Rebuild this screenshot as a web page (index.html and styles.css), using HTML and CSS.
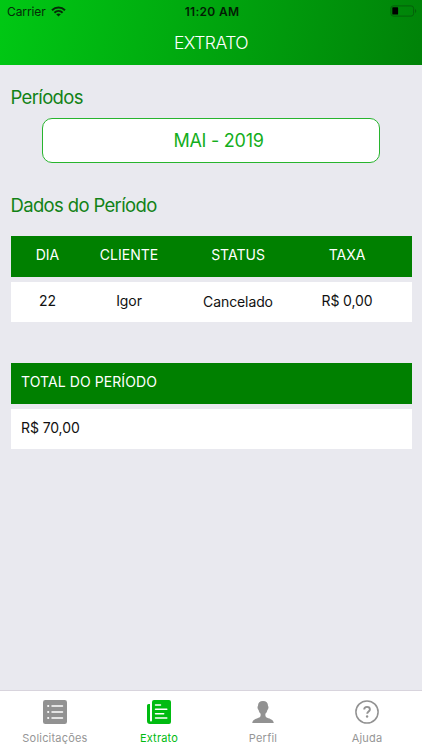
FILE: index.html
```html
<!DOCTYPE html>
<html lang="pt-BR">
<head>
<meta charset="utf-8">
<title>Extrato</title>
<link rel="stylesheet" href="styles.css">
</head>
<body>
<header class="header">
  <div class="status">
    <div class="carrier"><span>Carrier</span>
      <svg width="15" height="11" viewBox="0 0 15 11" fill="none" stroke="#062b08" stroke-width="2"><path d="M1 4.2C4.7.6 10.3.6 14 4.2M3.4 6.7c2.4-2.3 5.8-2.3 8.2 0"/><path d="M7.5 10.6 5.2 8.3c1.3-1.2 3.3-1.2 4.6 0z" fill="#062b08" stroke="none"/></svg>
    </div>
    <div class="clock">11:20 AM</div>
    <svg class="battery" width="27" height="12" viewBox="0 0 27 12"><rect x=".9" y=".9" width="22.7" height="10.2" rx="2.4" fill="none" stroke="#04600a"/><rect x="2.3" y="2.3" width="5.8" height="7.3" rx=".6" fill="#000"/><path d="M25 4v4c1.7-.6 1.7-3.4 0-4z" fill="#04600a"/></svg>
  </div>
  <h1 class="title">EXTRATO</h1>
</header>
<main class="content">
  <h2 class="heading">Períodos</h2>
  <button class="period">MAI - 2019</button>
  <h2 class="heading heading-data">Dados do Período</h2>
  <section class="table">
    <div class="row row-head"><span>DIA</span><span>CLIENTE</span><span>STATUS</span><span>TAXA</span></div>
    <div class="row row-body"><span>22</span><span>Igor</span><span class="state">Cancelado</span><span>R$ 0,00</span></div>
  </section>
  <section class="total">
    <div class="total-head">TOTAL DO PERÍODO</div>
    <div class="total-body">R$ 70,00</div>
  </section>
</main>
<nav class="tabs">
  <a class="tab">
    <svg width="24" height="24" viewBox="0 0 24 24"><rect width="24" height="24" rx="2.3" fill="#929292"/><g stroke="#fff" stroke-width="1.5" stroke-linecap="round"><path d="M9 6h10.5M9 12h10.5M9 18h10.5"/></g><g fill="#fff"><circle cx="5.2" cy="6" r="1.1"/><circle cx="5.2" cy="12" r="1.1"/><circle cx="5.2" cy="18" r="1.1"/></g></svg>
    <span>Solicitações</span>
  </a>
  <a class="tab tab-active">
    <svg width="24" height="24" viewBox="0 0 24 24"><path d="M7 0h15a2 2 0 0 1 2 2v20a2 2 0 0 1-2 2H3a3 3 0 0 1-3-3V5.5A1.5 1.5 0 0 1 1.5 4H3v16.2c0 1.8 2 1.8 2 0V2a2 2 0 0 1 2-2z" fill="#0b1"/><path d="M8.5 4.9h5M8.5 9.3h11.3M8.5 13.7h8.2M8.5 18.1h11.3" stroke="#fff" stroke-width="1.5" stroke-linecap="round"/></svg>
    <span>Extrato</span>
  </a>
  <a class="tab">
    <svg width="24" height="24" viewBox="0 0 24 24"><path d="M12 .9c3.4 0 5.2 2.1 5 5.2.9.4.5 3.2-.6 3.8-.4 1.8-1 2.8-1.9 3.6-.3 1.8-.2 3.1.7 3.8 2.4 1.4 7.2 1.7 7.6 5.8H1.2c.4-4.1 5.2-4.4 7.6-5.8.9-.7 1-2 .7-3.8-.9-.8-1.5-1.8-1.9-3.6-1.1-.6-1.5-3.4-.6-3.8-.2-3.1 1.6-5.2 5-5.2z" fill="#929292"/></svg>
    <span>Perfil</span>
  </a>
  <a class="tab">
    <svg width="24" height="24" viewBox="0 0 24 24" fill="none" stroke="#929292"><circle cx="12" cy="12" r="11.1" stroke-width="1.5"/><path d="M9.2 9.6C9.2 7.8 10.3 6.9 12 6.9s2.9 1 2.9 2.5c0 2-2.7 2.2-2.7 4.4" stroke-width="1.9"/><circle cx="12.1" cy="16.5" r="1.2" fill="#929292" stroke="none"/></svg>
    <span>Ajuda</span>
  </a>
</nav>
</body>
</html>
```
FILE: styles.css
```css
* { box-sizing: border-box; }
body {
  margin: 0;
  width: 422px;
  height: 750px;
  display: flex;
  flex-direction: column;
  overflow: hidden;
  background: #e9e9ef;
  color: #111;
  font-family: Inter, "Liberation Sans", sans-serif;
}
h1, h2 { margin: 0; font-weight: 400; }
svg { display: block; flex: none; }
.header {
  height: 65px;
  flex: none;
  background: linear-gradient(100deg, #00c814, #008208);
}
.status {
  height: 22px;
  display: grid;
  grid-template-columns: 1fr auto 1fr;
  align-items: center;
  padding: 0 5px 0 7px;
  color: #062b08;
  font-size: 12px;
}
.carrier { display: flex; align-items: center; gap: 5px; letter-spacing: -0.1px; }
.clock { color: #031c04; font-weight: 600; letter-spacing: 0.3px; }
.battery { justify-self: end; }
.title {
  color: #fff;
  font-size: 17.5px;
  font-weight: 300;
  line-height: 42px;
  text-align: center;
  letter-spacing: -0.5px;
}
.content { flex: 1; padding: 20px 10.5px 0; }
.heading {
  color: #128216;
  font-size: 18.5px;
  line-height: 24px;
  letter-spacing: -0.65px;
}
.period {
  display: block;
  width: 338px;
  height: 45px;
  margin: 9px 0 0 31.5px;
  padding: 0 0 0 15px;
  border: 1.3px solid #28b42e;
  border-radius: 10px;
  background: #fff;
  color: #14ae1c;
  font: 400 18px Inter, sans-serif;
  letter-spacing: -0.25px;
}
.heading-data { margin-top: 29.5px; }
.table { margin-top: 19.5px; display: grid; gap: 5px; }
.row {
  height: 40.5px;
  display: grid;
  grid-template-columns: 74px 89px 129px 89px;
  text-align: center;
  font-size: 14px;
  line-height: 38px;
}
.row-head, .total-head { background: #008000; color: #fff; }
.row-body, .total-body { background: #fff; }
.row-body { letter-spacing: -0.1px; }
.state { padding-top: 1px; }
.total { margin-top: 41px; display: grid; gap: 5px; }
.total-head, .total-body {
  height: 40.5px;
  padding-left: 10.5px;
  font-size: 14px;
  line-height: 38px;
}
.total-head { letter-spacing: 0.08px; }
.total-body { letter-spacing: -0.1px; }
.tabs {
  height: 60px;
  flex: none;
  display: grid;
  grid-template-columns: repeat(4, 104px);
  padding-left: 3px;
  border-top: 1px solid #d8d4dd;
  background: #fff;
}
.tab {
  display: flex;
  flex-direction: column;
  align-items: center;
  gap: 6px;
  padding-top: 9px;
  color: #969696;
  font-size: 11px;
  line-height: 16px;
  letter-spacing: 0.2px;
}
.tab-active { color: #0b1; }
```
